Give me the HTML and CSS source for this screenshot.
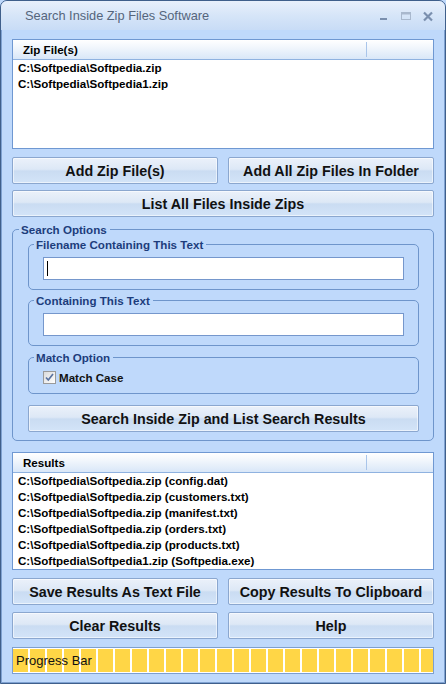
FILE: index.html
```html
<!DOCTYPE html>
<html>
<head>
<meta charset="utf-8">
<title>Search Inside Zip Files Software</title>
<link rel="stylesheet" href="styles.css">
</head>
<body>
<div class="window">
  <div class="titlebar">
    <span class="title">Search Inside Zip Files Software</span>
    <div class="controls">
      <svg class="ctl" width="12" height="12" viewBox="0 0 12 12"><rect x="2" y="7" width="7" height="2" fill="#7a8fae"/></svg>
      <svg class="ctl" width="12" height="12" viewBox="0 0 12 12"><rect x="1.5" y="1.5" width="9" height="7" fill="none" stroke="#a9b8cd" stroke-width="1"/><rect x="1.5" y="1.5" width="9" height="2" fill="#a9b8cd"/></svg>
      <svg class="ctl" width="12" height="12" viewBox="0 0 12 12"><path d="M2 1.5 L10 9.5 M10 1.5 L2 9.5" stroke="#7a8fae" stroke-width="2.2"/></svg>
    </div>
  </div>
  <div class="client">
    <div class="listbox zips">
      <div class="lv-header"><span class="col1">Zip File(s)</span><span class="col2"></span></div>
      <div class="row">C:\Softpedia\Softpedia.zip</div>
      <div class="row">C:\Softpedia\Softpedia1.zip</div>
    </div>
    <div class="btnrow">
      <button class="btn">Add Zip File(s)</button>
      <button class="btn">Add All Zip Files In Folder</button>
    </div>
    <div class="btnrow row2">
      <button class="btn">List All Files Inside Zips</button>
    </div>
    <fieldset class="group outer">
      <legend>Search Options</legend>
      <fieldset class="group inner first">
        <legend>Filename Containing This Text</legend>
        <div class="textbox"><span class="caret"></span></div>
      </fieldset>
      <fieldset class="group inner second">
        <legend>Containing This Text</legend>
        <div class="textbox"></div>
      </fieldset>
      <fieldset class="group inner third">
        <legend>Match Option</legend>
        <div class="check">
          <span class="box"><svg width="11" height="11" viewBox="0 0 11 11"><path d="M2 5.5 L4.3 8 L9 2" fill="none" stroke="#5a73a0" stroke-width="1.7"/></svg></span>
          <span class="label">Match Case</span>
        </div>
      </fieldset>
      <button class="btn search">Search Inside Zip and List Search Results</button>
    </fieldset>
    <div class="listbox results">
      <div class="lv-header"><span class="col1">Results</span><span class="col2"></span></div>
      <div class="row">C:\Softpedia\Softpedia.zip (config.dat)</div>
      <div class="row">C:\Softpedia\Softpedia.zip (customers.txt)</div>
      <div class="row">C:\Softpedia\Softpedia.zip (manifest.txt)</div>
      <div class="row">C:\Softpedia\Softpedia.zip (orders.txt)</div>
      <div class="row">C:\Softpedia\Softpedia.zip (products.txt)</div>
      <div class="row">C:\Softpedia\Softpedia1.zip (Softpedia.exe)</div>
    </div>
    <div class="btnrow bottom1">
      <button class="btn">Save Results As Text File</button>
      <button class="btn">Copy Results To Clipboard</button>
    </div>
    <div class="btnrow bottom2">
      <button class="btn">Clear Results</button>
      <button class="btn">Help</button>
    </div>
    <div class="progress">
      <div class="segments"><span class="ptext">Progress Bar</span></div>
    </div>
  </div>
</div>
</body>
</html>
```

FILE: styles.css
```css
html, body {
  margin: 0;
  padding: 0;
  width: 446px;
  height: 684px;
  overflow: hidden;
  background: #bfd9fb;
}

.window {
  box-sizing: border-box;
  width: 446px;
  height: 684px;
  border: 1px solid #3f5f8b;
  border-radius: 7px 7px 0 0;
  background: #bfd9fb;
  box-shadow: inset 1px 0 0 #7fa2d2, inset -1px 0 0 #7fa2d2, inset 0 -1px 0 #7fa2d2;
  display: flex;
  flex-direction: column;
  overflow: hidden;
  font-family: "Liberation Sans", Arial, sans-serif;
}

.titlebar {
  height: 29px;
  flex: none;
  display: flex;
  align-items: center;
  justify-content: space-between;
  background: linear-gradient(to bottom, #e8f0fb 0%, #d6e5f8 50%, #c8dcf6 100%);
  padding-left: 24px;
  padding-right: 11px;
}

.title {
  font-size: 12.8px;
  color: #55657c;
  line-height: 29px;
}

.controls {
  display: flex;
  align-items: center;
  gap: 10px;
  padding-top: 3px;
}

.ctl {
  display: block;
}

.client {
  padding: 9px 11px 0 11px;
  display: flex;
  flex-direction: column;
}

.listbox {
  box-sizing: border-box;
  border: 1px solid #6f98d2;
  background: #ffffff;
  font-size: 11.6px;
  font-weight: bold;
  color: #000;
}

.zips { height: 110px; }
.results { height: 118px; margin-top: 11px; }

.lv-header {
  height: 19px;
  border-bottom: 1px solid #8fb2e0;
  background: linear-gradient(to bottom, #ffffff 0%, #f1f6fc 40%, #d9e7f8 100%);
  display: flex;
  align-items: center;
}

.col1 {
  width: 343px;
  padding-left: 10px;
  line-height: 19px;
}

.col2 {
  width: 1px;
  height: 15px;
  background: #a9c5ea;
}

.row {
  height: 16px;
  line-height: 16px;
  padding-left: 5px;
  white-space: nowrap;
}

.btnrow {
  display: flex;
  gap: 10px;
  margin-top: 8px;
}

.btnrow.row2 { margin-top: 6px; }
.btnrow.bottom1 { margin-top: 8px; }
.btnrow.bottom2 { margin-top: 7px; }

.btn {
  flex: 1;
  box-sizing: border-box;
  height: 27px;
  margin: 0;
  padding: 0;
  border: 1px solid #8ba7cf;
  border-radius: 2px;
  background: linear-gradient(to bottom, #ebf1fa 0%, #dde8f6 45%, #cadcf2 52%, #d3e4f8 100%);
  box-shadow: inset 0 0 0 1px rgba(255,255,255,0.55);
  font-family: "Liberation Sans", Arial, sans-serif;
  font-size: 14.3px;
  font-weight: bold;
  color: #111;
  white-space: nowrap;
}

.group {
  margin: 0;
  border: 1px solid #6e95cb;
  border-radius: 5px;
  min-width: 0;
}

.group legend {
  padding: 0 3px 0 2px;
  margin-left: -9px;
  font-size: 11.6px;
  font-weight: bold;
  line-height: 15px;
  color: #1d3d7c;
}

.outer {
  margin-top: 5px;
  padding: 0 14px 8px 15px;
  display: flex;
  flex-direction: column;
}

.inner {
  padding: 5px 14px 9px 14px;
}

.first { margin-top: 0; }
.second { margin-top: 3px; }
.third { margin-top: 4px; padding-top: 6px; }

.textbox {
  box-sizing: border-box;
  width: 361px;
  height: 23px;
  border: 1px solid #7597cc;
  background: #fff;
  display: flex;
  align-items: center;
  padding-left: 3px;
}

.caret {
  width: 1px;
  height: 15px;
  background: #000;
}

.check {
  display: flex;
  align-items: center;
  height: 13px;
  gap: 3px;
}

.box {
  box-sizing: border-box;
  width: 13px;
  height: 13px;
  border: 1px solid #9a9a9a;
  background: linear-gradient(135deg, #dcdcdc 0%, #f0f0f0 60%, #ffffff 100%);
  display: flex;
  align-items: center;
  justify-content: center;
}

.box svg { display: block; }

.label {
  font-size: 11.6px;
  font-weight: bold;
  color: #111;
}

.btn.search {
  flex: none;
  margin-top: 11px;
}

.progress {
  box-sizing: border-box;
  margin-top: 8px;
  height: 27px;
  border: 1px solid #7d9fcf;
  background: #fff;
  padding: 1px 0 1px 0;
}

.segments {
  height: 23px;
  background: repeating-linear-gradient(to right, #ffd646 0px, #ffd646 15px, #ffffff 15px, #ffffff 17px);
  display: flex;
  align-items: center;
  padding-left: 3px;
}

.ptext {
  font-size: 13px;
  color: #111;
}
```
